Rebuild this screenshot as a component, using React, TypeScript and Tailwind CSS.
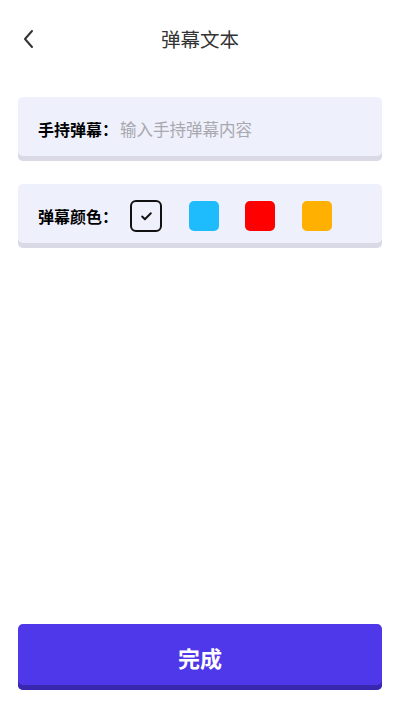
import { Check } from "lucide-react";

const colors = ["#1fbcfd", "#ff0000", "#ffb000"];

export default function App() {
  return (
    <div
      className="flex h-[711px] w-[400px] flex-col bg-white"
      style={{ fontFamily: '"Noto Sans CJK SC", "Noto Sans", sans-serif' }}
    >
      <div className="relative flex h-[78px] items-center justify-center">
        <svg
          className="absolute left-[21px] top-[29px]"
          width="16"
          height="20"
          viewBox="0 0 16 20"
          fill="none"
          stroke="#333"
          strokeWidth="2"
          strokeLinecap="round"
          strokeLinejoin="round"
        >
          <path d="M11 2 L4 10 L11 18" />
        </svg>
        <span className="text-[19.5px] text-[#333]">弹幕文本</span>
      </div>

      <div className="mx-[18px] mt-[19px] flex h-[64px] items-center rounded-[5px] bg-[#eef0fb] pl-[20px] shadow-[inset_0_-5px_0_#d9dae6]">
        <span className="text-[16px] font-bold text-black">手持弹幕：</span>
        <input
          className="ml-[2px] flex-1 bg-transparent text-[16.5px] text-black outline-none placeholder:text-[#a8a8ae]"
          placeholder="输入手持弹幕内容"
        />
      </div>

      <div className="mx-[18px] mt-[23px] flex h-[64px] items-center rounded-[5px] bg-[#eef0fb] pl-[20px] shadow-[inset_0_-5px_0_#d9dae6]">
        <span className="text-[16px] font-bold text-black">弹幕颜色：</span>
        <div className="ml-[12px] flex items-center gap-[26.5px]">
          <div className="flex h-[32px] w-[32px] items-center justify-center rounded-[6px] border-2 border-[#111]">
            <Check size={13} strokeWidth={3.5} color="#111" />
          </div>
          {colors.map((c) => (
            <div
              key={c}
              className="h-[30px] w-[30px] rounded-[5px]"
              style={{ backgroundColor: c }}
            />
          ))}
        </div>
      </div>

      <div className="flex-1" />

      <button className="mx-[18px] mb-[21px] flex h-[66px] items-center justify-center rounded-[5px] bg-[#4f38e9] shadow-[inset_0_-5px_0_#3a27b0]">
        <span className="text-[22px] font-bold text-white">完成</span>
      </button>
    </div>
  );
}
